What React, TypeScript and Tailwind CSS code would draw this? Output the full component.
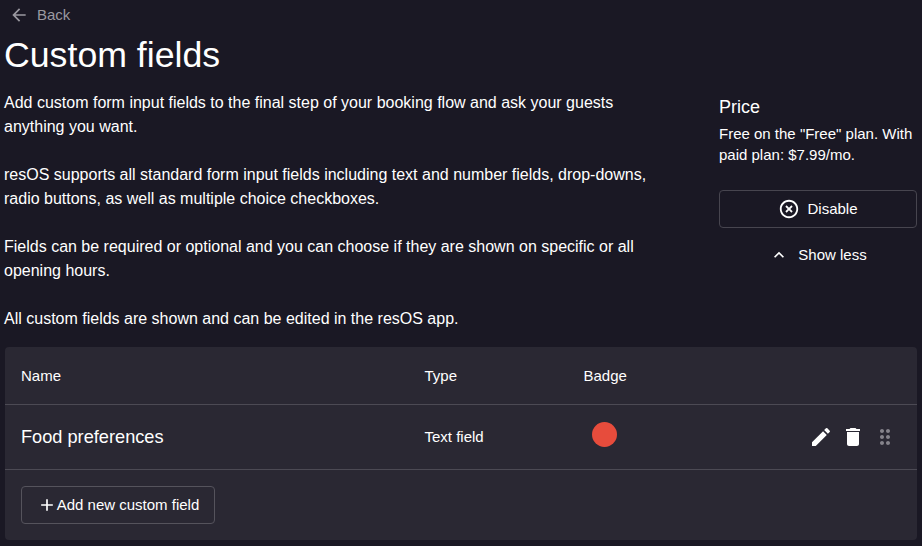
const ICONS = {
  back: "M20 11H7.83l5.59-5.59L12 4l-8 8 8 8 1.41-1.41L7.83 13H20v-2z",
  off: "M14.59 8L12 10.59 9.41 8 8 9.41 10.59 12 8 14.59 9.41 16 12 13.41 14.59 16 16 14.59 13.41 12 16 9.41 14.59 8zM12 2C6.47 2 2 6.47 2 12s4.47 10 10 10 10-4.47 10-10S17.53 2 12 2zm0 18c-4.41 0-8-3.59-8-8s3.59-8 8-8 8 3.59 8 8-3.59 8-8 8z",
  less: "M12 8l-6 6 1.41 1.41L12 10.83l4.59 4.58L18 14z",
  edit: "M3 17.25V21h3.75L17.81 9.94l-3.75-3.75L3 17.25zM20.71 7.04c.39-.39.39-1.02 0-1.41l-2.34-2.34a.9959.9959 0 0 0-1.41 0l-1.83 1.83 3.75 3.75 1.83-1.83z",
  del: "M6 19c0 1.1.9 2 2 2h8c1.1 0 2-.9 2-2V7H6v12zM19 4h-3.5l-1-1h-5l-1 1H5v2h14V4z",
  drag: "M11 18c0 1.1-.9 2-2 2s-2-.9-2-2 .9-2 2-2 2 .9 2 2zm-2-8c-1.1 0-2 .9-2 2s.9 2 2 2 2-.9 2-2-.9-2-2-2zm0-6c-1.1 0-2 .9-2 2s.9 2 2 2 2-.9 2-2-.9-2-2-2zm6 4c1.1 0 2-.9 2-2s-.9-2-2-2-2 .9-2 2 .9 2 2 2zm0 2c-1.1 0-2 .9-2 2s.9 2 2 2 2-.9 2-2-.9-2-2-2zm0 6c-1.1 0-2 .9-2 2s.9 2 2 2 2-.9 2-2-.9-2-2-2z",
  add: "M19 13h-6v6h-2v-6H5v-2h6V5h2v6h6v2z",
};

function Icon({ d, className }: { d: string; className: string }) {
  return (
    <svg viewBox="0 0 24 24" fill="currentColor" className={className} aria-hidden>
      <path d={d} />
    </svg>
  );
}

const PARAGRAPHS = [
  "Add custom form input fields to the final step of your booking flow and ask your guests anything you want.",
  "resOS supports all standard form input fields including text and number fields, drop-downs, radio buttons, as well as multiple choice checkboxes.",
  "Fields can be required or optional and you can choose if they are shown on specific or all opening hours.",
  "All custom fields are shown and can be edited in the resOS app.",
];

export default function App() {
  return (
    <div className="h-[546px] w-[922px] overflow-hidden bg-[#1a1824] px-[5px] font-['Liberation_Sans',Arial,sans-serif] text-white">
      <button type="button" className="flex h-[30px] items-center pl-[4px] text-[15px] text-[#9a98a0]">
        <Icon d={ICONS.back} className="h-5 w-5" />
        <span className="ml-[8px]">Back</span>
      </button>
      <h1 className="-ml-px h-[50px] text-[35.7px] leading-[50px]">Custom fields</h1>
      <div className="mt-[11px] flex">
        <div className="w-[650px] shrink-0 space-y-6">
          {PARAGRAPHS.map((p) => (
            <p key={p} className="-ml-px text-base leading-6">
              {p}
            </p>
          ))}
        </div>
        <div className="ml-[64px] w-[198px] shrink-0">
          <h2 className="mt-[4px] text-lg leading-6">Price</h2>
          <p className="mt-[4px] text-[15px] leading-[21px]">Free on the "Free" plan. With paid plan: $7.99/mo.</p>
          <button
            type="button"
            className="mt-[25px] flex h-[38px] w-full items-center justify-center rounded border border-[#47454f] text-[15px]"
          >
            <Icon d={ICONS.off} className="h-[22px] w-[22px]" />
            <span className="ml-[7px]">Disable</span>
          </button>
          <button type="button" className="mt-[12px] flex h-[30px] w-full items-center justify-center text-[15px]">
            <Icon d={ICONS.less} className="h-5 w-5" />
            <span className="ml-[9px]">Show less</span>
          </button>
        </div>
      </div>
      <div className="mt-4 h-[193px] w-[912px] rounded bg-[#2a2833]">
        <div className="flex h-[58px] items-center border-b border-[#4c4a54] px-4 pt-[2px] text-[15px]">
          <div className="w-[403.5px]">Name</div>
          <div className="w-[159px]">Type</div>
          <div>Badge</div>
        </div>
        <div className="flex h-[65px] items-center border-b border-[#4c4a54] pl-4 pr-[20px]">
          <div className="w-[403.5px] pt-[2px] text-[18.2px]">Food preferences</div>
          <div className="w-[167.5px] text-[15px]">Text field</div>
          <div className="mb-[6px] h-[25px] w-[25px] rounded-full bg-[#e74c3c]" />
          <div className="ml-auto flex items-center gap-2">
            <Icon d={ICONS.edit} className="h-6 w-6" />
            <Icon d={ICONS.del} className="h-6 w-6" />
            <Icon d={ICONS.drag} className="h-6 w-6 text-[#85838b]" />
          </div>
        </div>
        <div className="px-4 pt-4">
          <button
            type="button"
            className="flex h-[38px] w-[194px] items-center justify-center rounded border border-[#55535c] text-[15px]"
          >
            <Icon d={ICONS.add} className="h-5 w-5" />
            <span>Add new custom field</span>
          </button>
        </div>
      </div>
    </div>
  );
}
